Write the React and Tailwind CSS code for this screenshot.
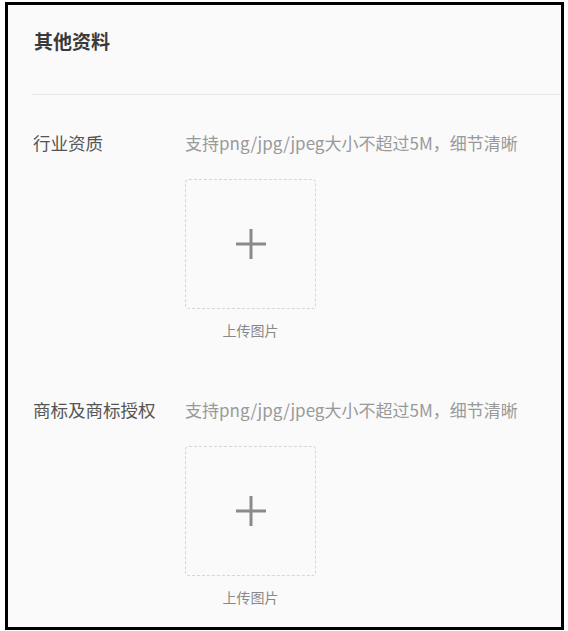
// Other materials section: two upload rows with dashed picture pickers
const font = { fontFamily: '"Noto Sans CJK SC", "Liberation Sans", sans-serif' };

function UploadRow({ label, className = "" }) {
	return (
		<div className={"flex " + className}>
			<div className="w-[152px] shrink-0 text-[17.5px] leading-6 text-[#555]">
				{label}
			</div>
			<div className="flex flex-col">
				<p className="text-[17px] leading-6 text-[#999]">
					支持png/jpg/jpeg大小不超过5M，细节清晰
				</p>
				<div className="mt-6 flex w-[131px] flex-col items-center">
					<button
						type="button"
						className="flex h-[130px] w-[131px] items-center justify-center rounded border border-dashed border-[#d6d6d6] bg-[#fafafa]"
					>
						<svg width="32" height="32" viewBox="0 0 32 32">
							<path
								d="M16 1v30M1 16h30"
								stroke="#8a8a8a"
								strokeWidth="3"
								fill="none"
							/>
						</svg>
					</button>
					<span className="mt-[11px] text-[14px] leading-5 text-[#888]">
						上传图片
					</span>
				</div>
			</div>
		</div>
	);
}

export default function App() {
	return (
		<div className="min-h-[631px] bg-white pl-[5px] pt-[2px]" style={font}>
			<div className="h-[628px] w-[559px] border-[3px] border-black bg-[#fafafa]">
				<div className="ml-[24px] border-b border-[#e8e8e8] pb-[41px] pt-[24px]">
					<h2 className="pl-[2px] text-[19px] font-semibold leading-6 text-[#3a3a3a]">
						其他资料
					</h2>
				</div>
				<div className="pl-[25px]">
					<UploadRow label="行业资质" className="mt-[36px]" />
					<UploadRow label="商标及商标授权" className="mt-[58px]" />
				</div>
			</div>
		</div>
	);
}
